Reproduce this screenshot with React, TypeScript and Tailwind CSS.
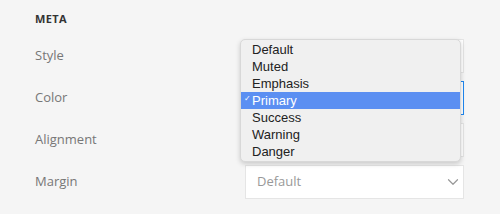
import { ChevronDown } from "lucide-react";

const ROWS = ["Style", "Color", "Alignment", "Margin"];
const OPTIONS = ["Default", "Muted", "Emphasis", "Primary", "Success", "Warning", "Danger"];

const App: React.FC = () => {
  return (
    <div className="relative h-[214px] w-[500px] bg-[#f5f5f5] pl-[35px] pt-[12px] font-['Open_Sans',sans-serif]">
      <div className="h-[14px] text-[11px] font-bold uppercase leading-[14px] tracking-[0.4px] text-[#333]">Meta</div>
      <div className="mt-[13px] flex flex-col gap-[8px]">
        {ROWS.map((label) => (
          <div key={label} className="flex h-[34px] items-center">
            <div className="w-[210px] text-[13px] text-[#777]">{label}</div>
            <div
              className={
                label === "Color"
                  ? "flex h-[34px] w-[219px] items-center justify-between border border-[#1e87f0] bg-white pl-[11px] pr-[1px]"
                  : "flex h-[34px] w-[219px] items-center justify-between border border-[#e5e5e5] bg-white pl-[11px] pr-[1px]"
              }
            >
              {/* rows under the open menu are hidden by it */}
              <span className="text-[13px] text-[#999]">{label === "Margin" ? "Default" : ""}</span>
              <ChevronDown size={18} strokeWidth={1.6} className="text-[#999]" />
            </div>
          </div>
        ))}
      </div>

      {/* Native select menu */}
      <div className="absolute left-[240px] top-[39px] w-[221px] rounded-[5px] border border-[#d8d8d8] bg-[#f0f0f0] py-[1px] font-['Liberation_Sans',sans-serif] shadow-[0_2px_5px_rgba(0,0,0,0.18)]">
        {OPTIONS.map((opt) => (
          <div
            key={opt}
            className={
              opt === "Primary"
                ? "relative flex h-[17px] items-center bg-[#5b8ff2] pl-[11px] text-[13px] text-white"
                : "relative flex h-[17px] items-center pl-[11px] text-[13px] text-[#222]"
            }
          >
            {opt === "Primary" && <span className="absolute left-[3px] top-[1px] text-[8px]">✓</span>}
            {opt}
          </div>
        ))}
      </div>
    </div>
  );
};

export default App;
